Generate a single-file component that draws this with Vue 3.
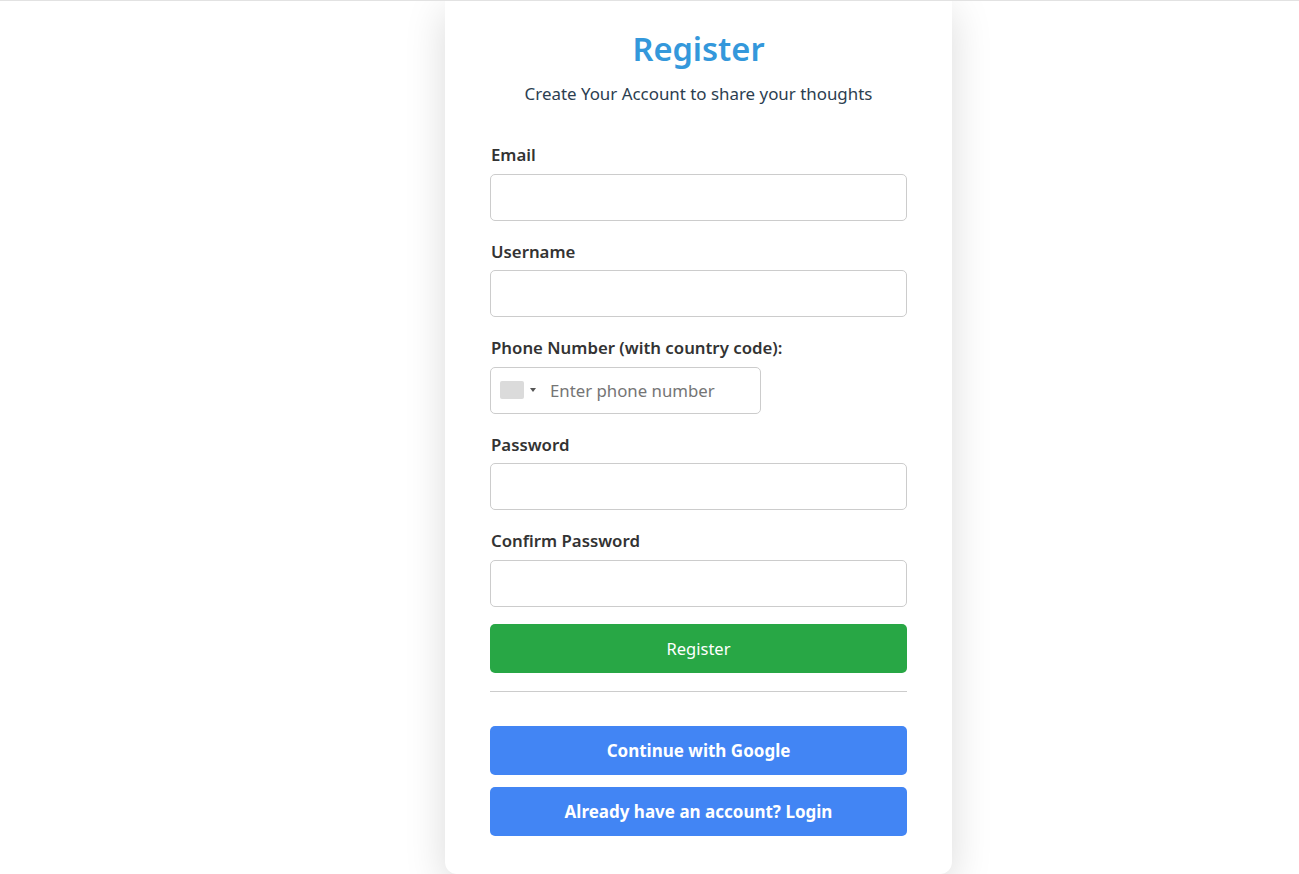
<script setup>
const fieldsTop = [
  { label: 'Email', type: 'email' },
  { label: 'Username', type: 'text' },
]
const fieldsBottom = [
  { label: 'Password', type: 'password' },
  { label: 'Confirm Password', type: 'password' },
]
</script>

<template>
  <div class="page">
    <main class="card">
      <h1 class="title">Register</h1>
      <p class="subtitle">Create Your Account to share your thoughts</p>
      <form class="form" @submit.prevent>
        <div v-for="f in fieldsTop" :key="f.label" class="field">
          <label class="label">{{ f.label }}</label>
          <input class="input" :type="f.type" />
        </div>
        <div class="field">
          <label class="label">Phone Number (with country code):</label>
          <div class="phone">
            <span class="flag"></span>
            <span class="caret"></span>
            <input class="phone-input" type="tel" placeholder="Enter phone number" />
          </div>
        </div>
        <div v-for="f in fieldsBottom" :key="f.label" class="field">
          <label class="label">{{ f.label }}</label>
          <input class="input" :type="f.type" />
        </div>
        <button class="btn green" type="submit">Register</button>
      </form>
      <hr class="rule" />
      <button class="btn blue first" type="button">Continue with Google</button>
      <button class="btn blue" type="button">Already have an account? Login</button>
    </main>
  </div>
</template>

<style>
html, body { margin: 0; background: #fff; overflow: hidden; }
</style>

<style scoped>
.page {
  height: 874px;
  box-sizing: border-box;
  border-top: 1px solid #e2e2e2;
  overflow: hidden;
  font-family: "Noto Sans", "Open Sans", sans-serif;
}
.card {
  width: 507px;
  height: 873px;
  margin-left: 445px;
  box-sizing: border-box;
  padding: 0 45px;
  background: #fff;
  border-radius: 0 0 12px 12px;
  box-shadow: 0 10px 40px rgba(0, 0, 0, 0.15);
}
.title {
  margin: 0;
  padding-top: 26px;
  text-align: center;
  font-size: 32.6px;
  line-height: 44px;
  font-weight: 600;
  color: #3498db;
}
.subtitle {
  margin: 0;
  padding-top: 11px;
  text-align: center;
  font-size: 16.9px;
  line-height: 24px;
  color: #2c3e50;
}
.form {
  display: flex;
  flex-direction: column;
  margin-top: 37px;
}
.field {
  display: flex;
  flex-direction: column;
  margin-bottom: 18.44px;
}
.label {
  font-size: 16.8px;
  line-height: 24px;
  font-weight: 600;
  color: #333;
  margin-top: 0.45px;
  margin-bottom: 6.56px;
  padding-left: 1px;
}
.input {
  box-sizing: border-box;
  width: 100%;
  height: 47px;
  border: 1px solid #ccc;
  border-radius: 5px;
  background: #fff;
  outline: none;
}
.phone {
  box-sizing: border-box;
  width: 271px;
  height: 47px;
  border: 1px solid #ccc;
  border-radius: 5px;
  display: flex;
  align-items: center;
  padding-left: 9px;
}
.flag {
  width: 24px;
  height: 18px;
  background: #dbdbdb;
  border-radius: 2px;
}
.caret {
  margin-left: 6px;
  width: 0;
  height: 0;
  border-left: 3px solid transparent;
  border-right: 3px solid transparent;
  border-top: 4px solid #555;
}
.phone-input {
  flex: 1;
  min-width: 0;
  border: none;
  outline: none;
  margin-left: 14px;
  padding: 0;
  font: inherit;
  font-size: 16.8px;
  color: #333;
}
.phone-input::placeholder { color: #757575; opacity: 1; }
.btn {
  display: block;
  width: 100%;
  height: 49px;
  border: none;
  border-radius: 5px;
  color: #fff;
  font-family: inherit;
  font-size: 16.5px;
  cursor: pointer;
  padding: 0;
}
.green { background: #28a745; margin-top: -1px; }
.blue { background: #4285f4; font-weight: 700; font-size: 17px; margin-top: 12px; }
.blue.first { margin-top: 34px; }
.rule {
  border: none;
  border-top: 1px solid #ccc;
  margin: 18px 0 0;
}
</style>
